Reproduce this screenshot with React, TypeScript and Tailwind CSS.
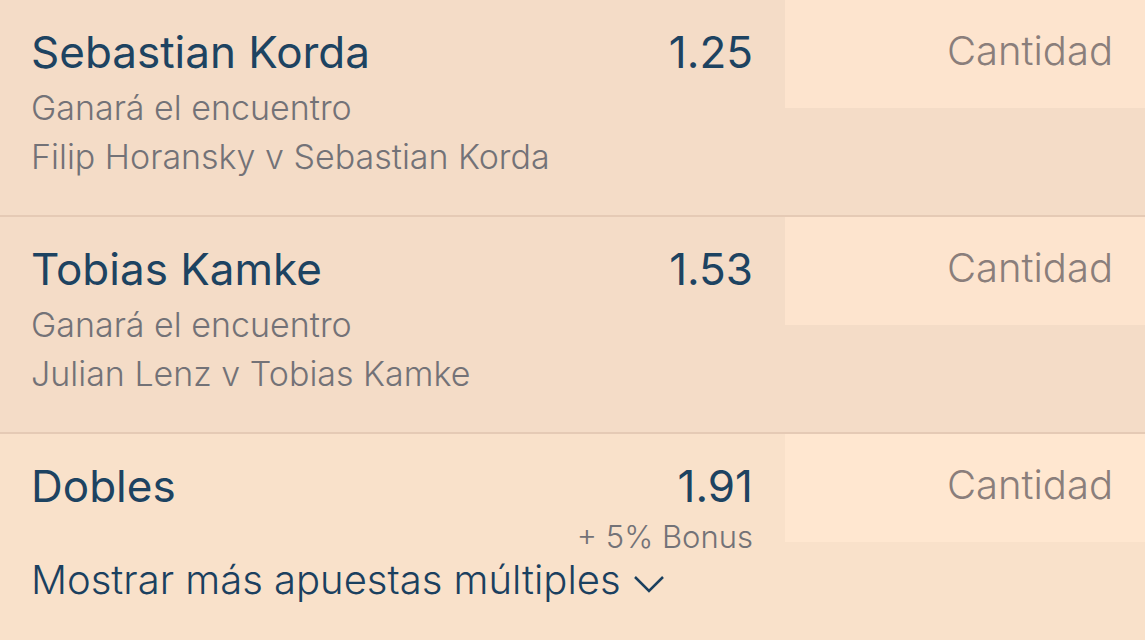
import React from "react";

interface Bet {
  id: string;
  name: string;
  odds: string;
  market: string;
  match: string;
}

const bets: Bet[] = [
  { id: "korda", name: "Sebastian Korda", odds: "1.25", market: "Ganará el encuentro", match: "Filip Horansky v Sebastian Korda" },
  { id: "kamke", name: "Tobias Kamke", odds: "1.53", market: "Ganará el encuentro", match: "Julian Lenz v Tobias Kamke" },
];

function StakeInput({ id, label, tone }: { id: string; label: string; tone: string }) {
  return (
    <div className="w-[360px] shrink-0">
      <input
        id={id}
        aria-label={label}
        placeholder="Cantidad"
        inputMode="decimal"
        className={`block h-[108px] w-full pr-8 pb-2 text-right text-[40px] text-[#1b405f] outline-none placeholder:text-[#8a7e7b] ${tone}`}
      />
    </div>
  );
}

function Heading({ name, odds }: { name: string; odds: string }) {
  return (
    <div className="flex justify-between text-[44px] leading-[56px] font-normal text-[#1d4361]">
      <h2>{name}</h2>
      <span>{odds}</span>
    </div>
  );
}

function BetRow({ bet }: { bet: Bet }) {
  return (
    <section className="flex border-b-2 border-[#e5cab5] bg-[#f4dcc7]">
      <div className="min-w-0 flex-1 pt-6 pr-8 pb-[34px] pl-[31px]">
        <Heading name={bet.name} odds={bet.odds} />
        <div className="pt-[3px] text-[34px] leading-[49px] text-[#737277]">
          <p>{bet.market}</p>
          <p>{bet.match}</p>
        </div>
      </div>
      <StakeInput id={bet.id} label={`Cantidad para ${bet.name}`} tone="bg-[#fde4ce]" />
    </section>
  );
}

export default function App() {
  return (
    <main className="min-h-screen bg-[#f9e1ca] font-['Inter',sans-serif] font-light">
      {bets.map((bet) => (
        <BetRow key={bet.id} bet={bet} />
      ))}
      <section className="flex">
        <div className="min-w-0 flex-1 pt-6 pr-8 pl-[31px]">
          <Heading name="Dobles" odds="1.91" />
          <p className="text-right text-[31px] leading-[46px] text-[#737277]">+ 5% Bonus</p>
          <button type="button" className="flex items-center gap-3 text-[40px] leading-[40px] whitespace-nowrap text-[#1b405f]">
            Mostrar más apuestas múltiples
            <svg className="mt-2" width="32" height="20" viewBox="0 0 32 20" fill="none" stroke="currentColor" strokeWidth="2.5" aria-hidden="true">
              <path d="M2 3 L16 17 L30 3" />
            </svg>
          </button>
        </div>
        <StakeInput id="dobles" label="Cantidad para Dobles" tone="bg-[#ffe7d0]" />
      </section>
    </main>
  );
}
